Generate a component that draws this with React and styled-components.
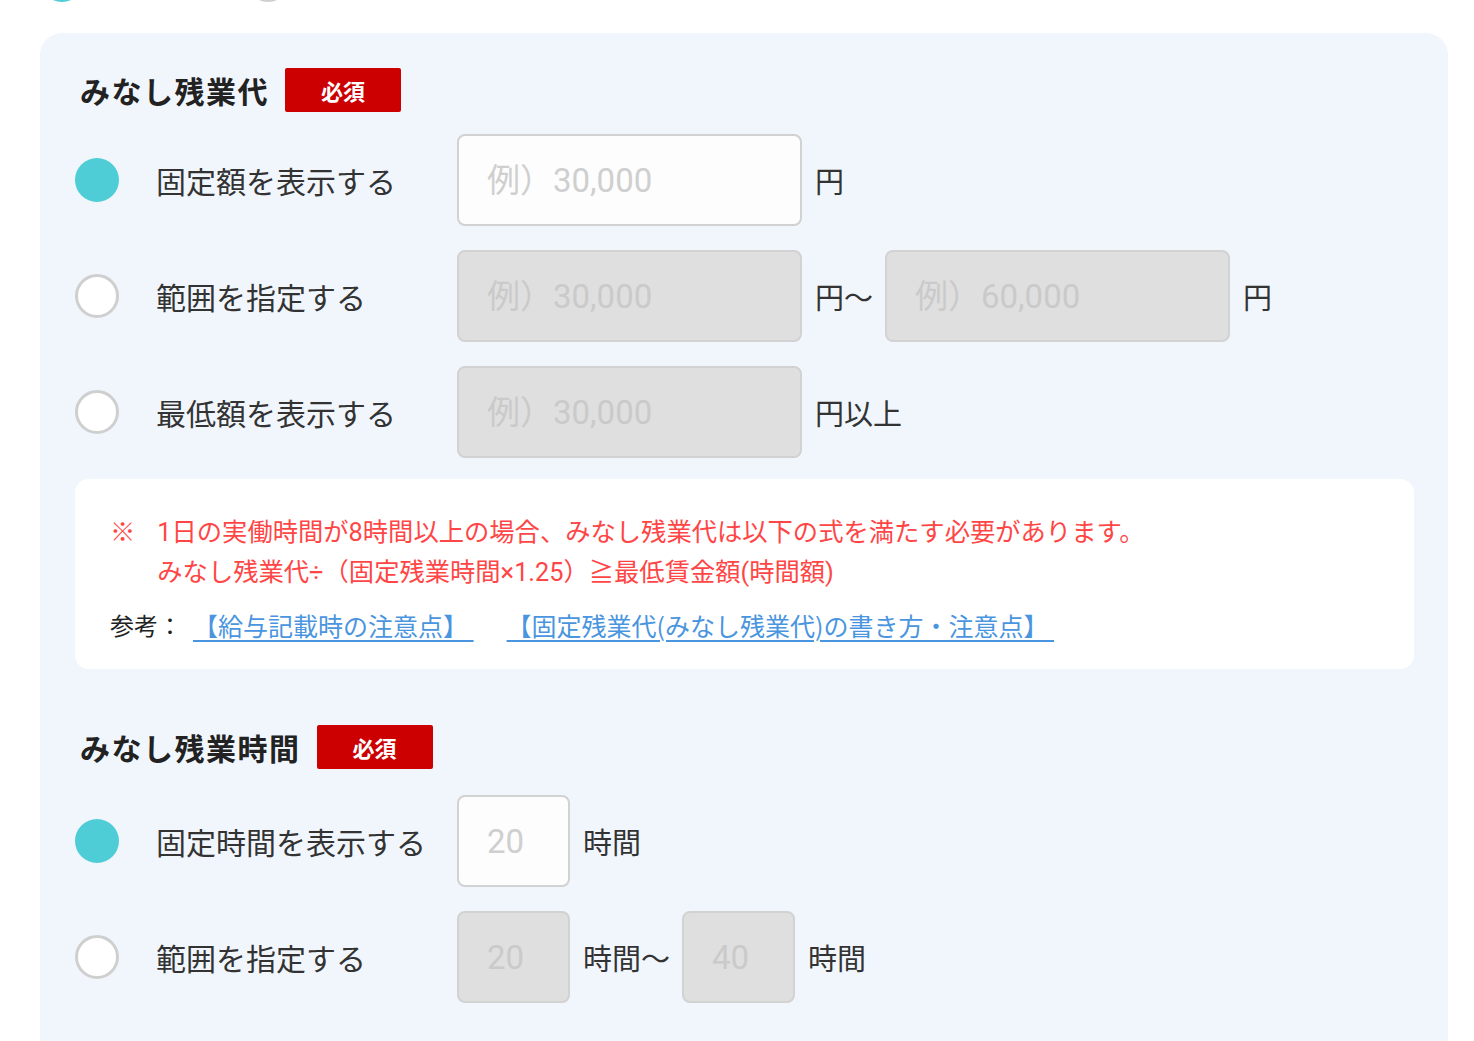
import React from "react";
import styled, { createGlobalStyle } from "styled-components";

const GlobalStyle = createGlobalStyle`
  body {
    margin: 0;
    background: #ffffff;
    font-family: Roboto, "Noto Sans CJK JP", sans-serif;
    color: #333333;
  }
`;

function App() {
  const amountRows = [
    { label: "固定額を表示する", checked: true, inputs: [{ ph: "例）30,000", unit: "円" }] },
    {
      label: "範囲を指定する",
      inputs: [
        { ph: "例）30,000", unit: "円〜" },
        { ph: "例）60,000", unit: "円" },
      ],
    },
    { label: "最低額を表示する", inputs: [{ ph: "例）30,000", unit: "円以上" }] },
  ];

  const hourRows = [
    { label: "固定時間を表示する", checked: true, inputs: [{ ph: "20", unit: "時間" }] },
    {
      label: "範囲を指定する",
      inputs: [
        { ph: "20", unit: "時間〜" },
        { ph: "40", unit: "時間" },
      ],
    },
  ];

  return (
    <Page>
      <GlobalStyle />
      <PrevOptions>
        <Radio $checked />
        <Radio />
      </PrevOptions>
      <Panel>
        <Section>
          <Heading>
            <Title>みなし残業代</Title>
            <Badge>必須</Badge>
          </Heading>
          <Rows>
            {amountRows.map((row, i) => (
              <OptionRow key={i}>
                <Radio $checked={row.checked} />
                <Label>{row.label}</Label>
                <Fields>
                  {row.inputs.map((inp, j) => (
                    <Field key={j}>
                      <TextInput
                        $small={false}
                        placeholder={inp.ph}
                        disabled={!row.checked}
                      />
                      <Unit>{inp.unit}</Unit>
                    </Field>
                  ))}
                </Fields>
              </OptionRow>
            ))}
          </Rows>
          <Note>
            <NoteLine>
              <Mark>※</Mark>
              <span>
                1日の実働時間が8時間以上の場合、みなし残業代は以下の式を満たす必要があります。
                <br />
                みなし残業代÷（固定残業時間×1.25）≧最低賃金額(時間額)
              </span>
            </NoteLine>
            <RefLine>
              参考：
              <RefLink href="#">【給与記載時の注意点】 </RefLink>
              <RefLink href="#">【固定残業代(みなし残業代)の書き方・注意点】 </RefLink>
            </RefLine>
          </Note>
        </Section>

        <Section $second>
          <Heading>
            <Title>みなし残業時間</Title>
            <Badge>必須</Badge>
          </Heading>
          <Rows $second>
            {hourRows.map((row, i) => (
              <OptionRow key={i}>
                <Radio $checked={row.checked} />
                <Label>{row.label}</Label>
                <Fields>
                  {row.inputs.map((inp, j) => (
                    <Field key={j}>
                      <TextInput
                        $small
                        placeholder={inp.ph}
                        disabled={!row.checked}
                      />
                      <Unit>{inp.unit}</Unit>
                    </Field>
                  ))}
                </Fields>
              </OptionRow>
            ))}
          </Rows>
        </Section>
      </Panel>
    </Page>
  );
}

const Page = styled.div`
  width: 1474px;
  height: 1041px;
  overflow: hidden;
  box-sizing: border-box;
`;

const PrevOptions = styled.div`
  display: flex;
  gap: 162px;
  padding-left: 40px;
  margin-top: -42px;
  height: 44px;
`;

const Panel = styled.div`
  margin: 31px 26px 0 40px;
  background: #f1f6fd;
  border-radius: 22px 22px 0 0;
  padding: 35px 34px 40px 35px;
  min-height: 1100px;
  box-sizing: border-box;
`;

const Section = styled.section`
  margin-top: ${(p) => (p.$second ? "56px" : "0")};
`;

const Heading = styled.div`
  display: flex;
  align-items: center;
  gap: 16px;
  padding-left: 5px;
  height: 44px;
`;

const Title = styled.h2`
  margin: 0;
  font-family: "Noto Sans CJK JP", sans-serif;
  font-size: 30px;
  font-weight: 700;
  color: #222222;
  letter-spacing: 1.5px;
`;

const Badge = styled.span`
  display: inline-flex;
  align-items: center;
  justify-content: center;
  width: 116px;
  height: 44px;
  background: #cc0000;
  color: #ffffff;
  border-radius: 2px;
  font-family: "Noto Sans CJK JP", sans-serif;
  font-size: 22px;
  font-weight: 700;
`;

const Rows = styled.div`
  display: flex;
  flex-direction: column;
  gap: 24px;
  margin-top: ${(p) => (p.$second ? "26px" : "22px")};
`;

const OptionRow = styled.div`
  display: flex;
  align-items: center;
  height: 92px;
`;

const Radio = styled.span`
  flex: none;
  width: 44px;
  height: 44px;
  border-radius: 50%;
  box-sizing: border-box;
  background: ${(p) => (p.$checked ? "#4fcdd6" : "#ffffff")};
  border: ${(p) => (p.$checked ? "none" : "3px solid #cfcfcf")};
`;

const Label = styled.span`
  flex: none;
  width: 301px;
  margin-left: 37px;
  font-family: "Noto Sans CJK JP", sans-serif;
  font-size: 30px;
  color: #333333;
  white-space: nowrap;
`;

const Fields = styled.div`
  display: flex;
  align-items: center;
  gap: 12px;
`;

const Field = styled.div`
  display: flex;
  align-items: center;
  gap: 13px;
`;

const TextInput = styled.input`
  box-sizing: border-box;
  width: ${(p) => (p.$small ? "113px" : "345px")};
  height: 92px;
  padding: 0 0 0 28px;
  border: 2px solid #d2d2d2;
  border-radius: 8px;
  background: #fdfdfd;
  font-family: Roboto, "Noto Sans CJK JP", sans-serif;
  font-size: 33px;
  color: #333333;
  outline: none;

  &::placeholder {
    color: #cfcfcf;
  }

  &:disabled {
    background: #dfdfdf;
  }

  &:disabled::placeholder {
    color: #cacaca;
  }
`;

const Unit = styled.span`
  font-family: "Noto Sans CJK JP", sans-serif;
  font-size: 29px;
  color: #333333;
  white-space: nowrap;
`;

const Note = styled.div`
  margin-top: 21px;
  background: #ffffff;
  border-radius: 14px;
  padding: 34px 35px 24px 35px;
  font-family: "Noto Sans CJK JP", sans-serif;
`;

const NoteLine = styled.div`
  display: flex;
  gap: 22px;
  color: #ff4646;
  font-family: Roboto, "Noto Sans CJK JP", sans-serif;
  font-size: 25.3px;
  line-height: 40px;
`;

const Mark = styled.span`
  flex: none;
`;

const RefLine = styled.div`
  margin-top: 12px;
  font-size: 24px;
  line-height: 40px;
  color: #222222;
  display: flex;
  gap: 33px;
`;

const RefLink = styled.a`
  color: #4a95e0;
  font-size: 25px;
  text-decoration: underline;
  text-underline-offset: 4px;
  white-space: pre;
  &:first-of-type {
    margin-left: -22px;
  }
`;

export default App;
